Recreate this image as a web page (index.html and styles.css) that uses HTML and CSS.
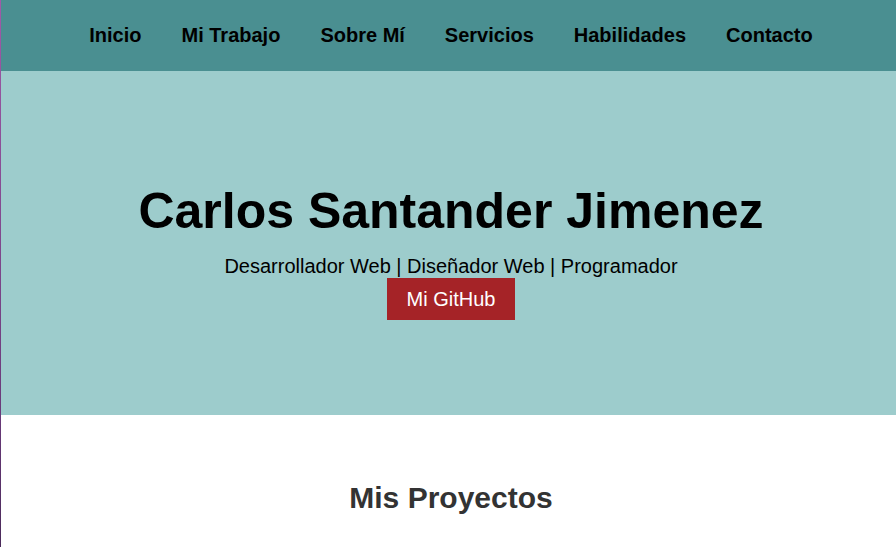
FILE: index.html
```html
<!DOCTYPE html>
<html lang="es">
<head>
<meta charset="utf-8">
<title>Carlos Santander Jimenez</title>
<link rel="stylesheet" href="styles.css">
</head>
<body>
<div class="page">
  <nav class="nav">
    <ul class="nav-list">
      <li><a href="#" class="nav-link">Inicio</a></li>
      <li><a href="#" class="nav-link">Mi Trabajo</a></li>
      <li><a href="#" class="nav-link">Sobre Mí</a></li>
      <li><a href="#" class="nav-link">Servicios</a></li>
      <li><a href="#" class="nav-link">Habilidades</a></li>
      <li><a href="#" class="nav-link">Contacto</a></li>
    </ul>
  </nav>
  <header class="hero">
    <h1 class="hero-title">Carlos Santander Jimenez</h1>
    <p class="hero-sub">Desarrollador Web | Diseñador Web | Programador</p>
    <a href="#" class="btn">Mi GitHub</a>
  </header>
  <section class="projects">
    <h2 class="section-title">Mis Proyectos</h2>
  </section>
</div>
</body>
</html>
```

FILE: styles.css
```css
html, body {
  margin: 0;
  padding: 0;
  background: #ffffff;
}
body {
  font-family: "Liberation Sans", Arial, sans-serif;
}
.page {
  min-height: 547px;
  border-left: 1px solid;
  border-image: linear-gradient(#a05aa8, #6a3a7a 75%, #4a2a5a) 1;
}
.nav {
  background: #4a8f91;
  padding: 24px 0 24px 5px;
}
.nav-list {
  list-style: none;
  margin: 0;
  padding: 0;
  display: flex;
  justify-content: center;
  gap: 40px;
}
.nav-link {
  color: #000;
  text-decoration: none;
  font-weight: bold;
  font-size: 20px;
  line-height: 23px;
  display: block;
}
.hero {
  background: #9dcccc;
  padding: 112px 0 95px 5px;
  text-align: center;
}
.hero-title {
  margin: 0 0 15px;
  font-size: 50px;
  line-height: 57px;
  font-weight: bold;
  color: #000;
}
.hero-sub {
  margin: 0;
  font-size: 20px;
  line-height: 23px;
  color: #000;
}
.btn {
  display: inline-block;
  background: #a52327;
  color: #fff;
  text-decoration: none;
  font-size: 20px;
  line-height: 22px;
  padding: 10px 20px;
}
.projects {
  padding: 66px 0 0 5px;
  text-align: center;
}
.section-title {
  margin: 0;
  font-size: 30px;
  line-height: 34px;
  font-weight: bold;
  color: #333;
}
```
